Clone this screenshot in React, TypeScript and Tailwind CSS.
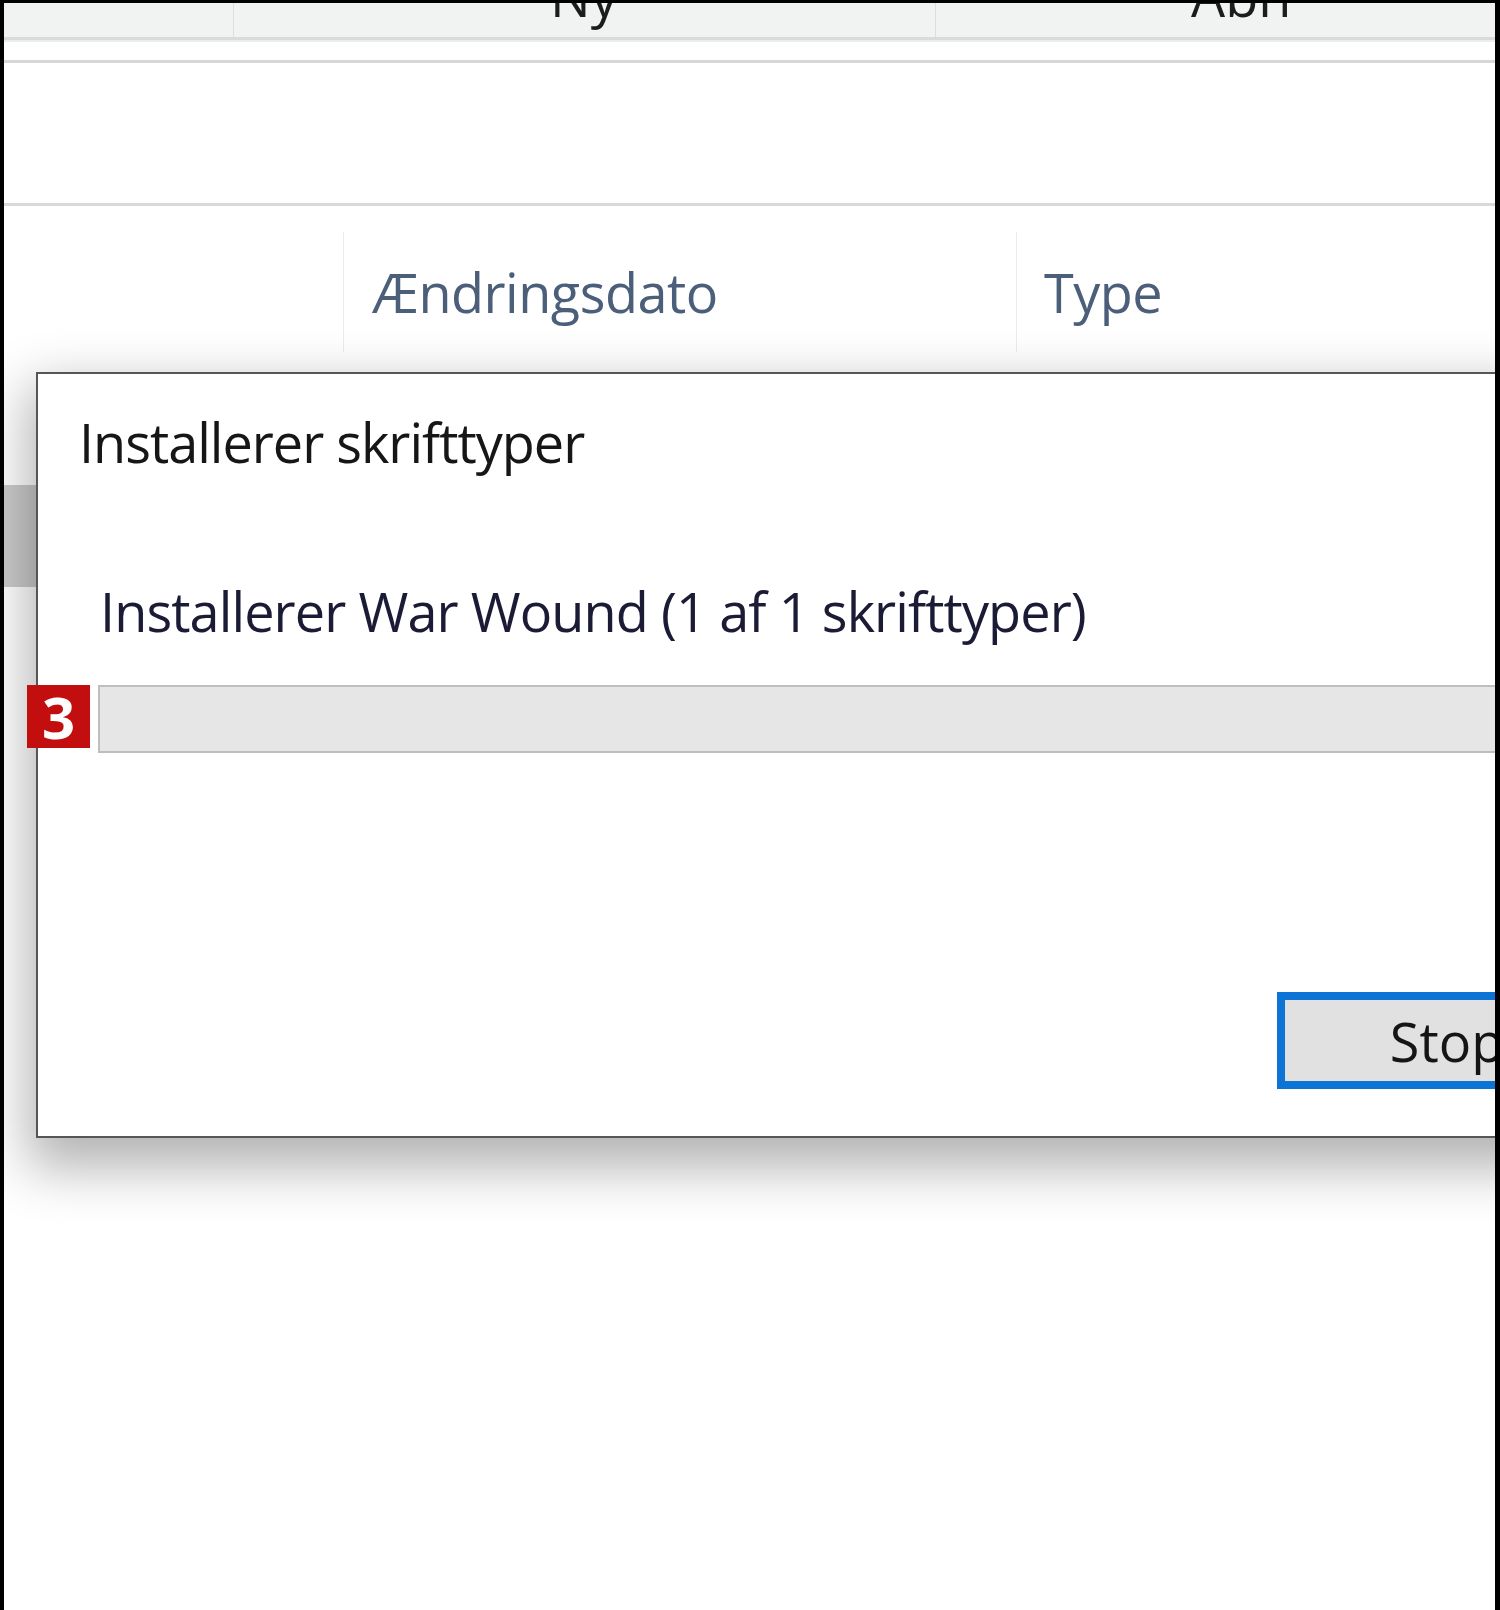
import React from 'react';

const font = "font-['Open_Sans','Noto_Sans',sans-serif]";

const App: React.FC = () => {
  return (
    <div className={`w-[1500px] h-[1610px] bg-white border-t-[3px] border-l-[4px] border-r-[5px] border-black overflow-hidden ${font}`}>
      {/* top header band (scrolled, text cut off) */}
      <div className="h-[34px] bg-[#f1f3f3] flex overflow-hidden">
        <div className="w-[230px] border-r border-[#dcdede]"></div>
        <div className="w-[702px] border-r border-[#dcdede] pl-[316px]">
          <div className="text-[54px] leading-[54px] -mt-[34px] text-[#1c1c1c]">Ny</div>
        </div>
        <div className="flex-1 pl-[255px]">
          <div className="text-[54px] leading-[54px] -mt-[34px] text-[#1c1c1c]">Åbn</div>
        </div>
      </div>
      <div className="h-[3px] bg-[#d9dbdb]"></div>
      <div className="h-[2px] bg-[#eceeee]"></div>
      <div className="h-[18px]"></div>
      <div className="h-[3px] bg-[#d6d8d8]"></div>
      <div className="h-[140px]"></div>
      <div className="h-[3px] bg-[#d8dada]"></div>

      {/* column headers */}
      <div className="h-[166px] flex">
        <div className="w-[340px] pt-[26px]">
          <div className="h-[120px] ml-auto w-px bg-[#ececec]"></div>
        </div>
        <div className="w-[672px] pl-[28px] pt-[59px] text-[54px] leading-[54px] tracking-[-0.5px] text-[#4c5f7a]">Ændringsdato</div>
        <div className="pt-[26px]">
          <div className="h-[120px] w-px bg-[#ececec]"></div>
        </div>
        <div className="pl-[27px] pt-[59px] text-[54px] leading-[54px] tracking-[-0.5px] text-[#4c5f7a]">Type</div>
      </div>

      {/* dialog area */}
      <div className="flex">
        <div className="w-[32px] shrink-0">
          <div className="mt-[113px] h-[102px] bg-[#cbcbcb]"></div>
        </div>
        <div className="relative w-[1600px] shrink-0 h-[766px] border-2 border-[#555757] bg-white shadow-[0_22px_50px_8px_rgba(0,0,0,0.3)]">
          <div className="pl-[41px] pt-[41px] text-[54px] leading-[54px] tracking-[-1px] text-[#161616]">Installerer skrifttyper</div>
          <div className="pl-[62px] mt-[115px] text-[54px] leading-[54px] tracking-[-0.9px] text-[#1b1b36]">Installerer War Wound (1 af 1 skrifttyper)</div>
          <div className="relative mt-[47px] ml-[60px] h-[68px] border-2 border-[#bdbfbf] bg-[#e5e6e5]">
            <div className="absolute -left-[73px] -top-[2px] w-[63px] h-[63px] bg-[#c20e0e] flex items-center justify-center text-white font-bold text-[58px] leading-none">3</div>
          </div>
          <div className="mt-[239px] ml-[1239px] w-[340px] h-[97px] border-[8px] border-[#0b74d5] bg-[#e1e1e1] flex items-center justify-center text-[54px] leading-none text-[#151515]">Stop</div>
        </div>
      </div>
    </div>
  );
};

export default App;
